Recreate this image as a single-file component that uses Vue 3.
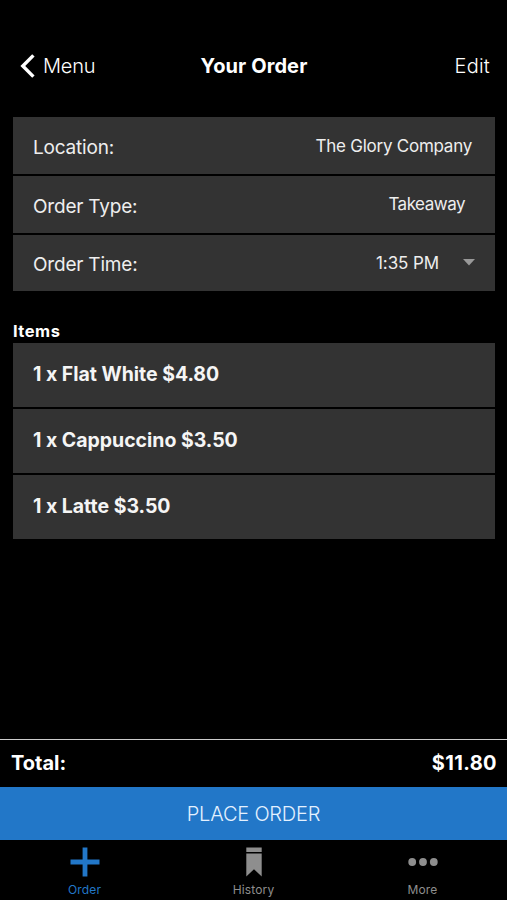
<template>
  <div class="screen">
    <header class="navbar">
      <button type="button" class="nav-back">
        <svg class="chevron" viewBox="0 0 16 24" width="16" height="24">
          <path d="M13.4 1.4 L2.8 12 L13.4 22.6" fill="none" stroke="#fff" stroke-width="3.4" />
        </svg>
        <span class="nav-text menu-text">Menu</span>
      </button>
      <h1 class="nav-title">Your Order</h1>
      <button type="button" class="nav-edit nav-text">Edit</button>
    </header>

    <main class="content">
      <section class="details">
        <div v-for="row in details" :key="row.label" class="detail-row">
          <span class="detail-label">{{ row.label }}</span>
          <span class="detail-value" :class="row.name">{{ row.value }}</span>
          <svg v-if="row.picker" class="caret" viewBox="0 0 12 7" width="12" height="7">
            <path d="M0 0 H12 L6 6.6 Z" fill="#999" />
          </svg>
        </div>
      </section>

      <h2 class="items-title">Items</h2>
      <section class="items">
        <div v-for="item in items" :key="item.name" class="item-row">
          <span>{{ item.qty }} x {{ item.name }} ${{ item.price }}</span>
        </div>
      </section>
    </main>

    <div class="total">
      <span class="total-label">Total:</span>
      <span class="total-price">$11.80</span>
    </div>
    <button type="button" class="place-order"><span>PLACE ORDER</span></button>

    <nav class="tabbar">
      <a class="tab active">
        <svg viewBox="0 0 30 30" width="30" height="30">
          <path d="M15 0.5 V29.5 M0.5 15 H29.5" fill="none" stroke="currentColor" stroke-width="4.8" />
        </svg>
        <span>Order</span>
      </a>
      <a class="tab">
        <svg viewBox="0 0 30 30" width="30" height="30">
          <path d="M7.3 0.5 H22.7 V5 H7.3 Z M7.3 6.4 H22.7 V29.5 L15 22.3 L7.3 29.5 Z" fill="currentColor" />
        </svg>
        <span>History</span>
      </a>
      <a class="tab">
        <svg viewBox="0 0 30 30" width="30" height="30">
          <circle cx="4.2" cy="15" r="3.9" fill="currentColor" />
          <circle cx="15" cy="15" r="3.9" fill="currentColor" />
          <circle cx="25.8" cy="15" r="3.9" fill="currentColor" />
        </svg>
        <span>More</span>
      </a>
    </nav>
  </div>
</template>

<script setup>
import { ref } from 'vue'

const details = ref([
  { name: 'location', label: 'Location:', value: 'The Glory Company' },
  { name: 'type', label: 'Order Type:', value: 'Takeaway' },
  { name: 'time', label: 'Order Time:', value: '1:35 PM', picker: true }
])

const items = ref([
  { qty: 1, name: 'Flat White', price: '4.80' },
  { qty: 1, name: 'Cappuccino', price: '3.50' },
  { qty: 1, name: 'Latte', price: '3.50' }
])
</script>

<style>
body {
  margin: 0;
  background: #000;
}
</style>

<style scoped>
.screen {
  display: flex;
  flex-direction: column;
  height: 100vh;
  background: #000;
  color: #fff;
  font-family: Inter, "Liberation Sans", sans-serif;
  overflow: hidden;
}

button {
  padding: 0;
  border: none;
  background: none;
  color: inherit;
  font-family: inherit;
  cursor: pointer;
}

.navbar {
  display: grid;
  grid-template-columns: 1fr auto 1fr;
  align-items: center;
  height: 50px;
  padding: 41px 17px 26px 20px;
}

.nav-back {
  display: flex;
  align-items: center;
  gap: 7px;
}

.nav-text {
  font-size: 20px;
  line-height: 24px;
  font-weight: 300;
}

.menu-text {
  letter-spacing: -0.2px;
}

.nav-title {
  margin: 0 2px 0 0;
  font-size: 20px;
  line-height: 24px;
  font-weight: 700;
  letter-spacing: 0.1px;
}

.nav-edit {
  justify-self: end;
  letter-spacing: 0.2px;
}

.content {
  flex: 1;
  padding: 0 12px 0 13px;
}

.details {
  display: flex;
  flex-direction: column;
  gap: 2px;
}

.detail-row {
  display: flex;
  align-items: center;
  height: 56.8px;
  padding: 0 20px;
  background: #333;
  color: #eee;
}

.detail-label {
  flex: 1;
  padding-top: 4px;
  font-size: 19px;
  letter-spacing: -0.2px;
}

.detail-value {
  padding-top: 1px;
  font-size: 17px;
  letter-spacing: -0.25px;
}

.detail-value.location {
  margin-right: 3px;
}

.detail-value.type {
  margin-right: 10px;
  padding-top: 0;
  letter-spacing: -0.5px;
}

.detail-value.time {
  letter-spacing: -0.1px;
}

.caret {
  margin-left: 24px;
}

.items-title {
  margin: 28.6px 0 0;
  height: 23px;
  font-size: 16.5px;
  line-height: 23px;
  font-weight: 700;
  letter-spacing: 0.5px;
}

.items {
  display: flex;
  flex-direction: column;
  gap: 1.5px;
}

.item-row {
  display: flex;
  align-items: center;
  box-sizing: border-box;
  height: 64.5px;
  padding: 0 20px 2px;
  background: #333;
  color: #f5f5f5;
  font-size: 19.5px;
  font-weight: 700;
  letter-spacing: -0.03px;
}

.total {
  display: flex;
  align-items: center;
  justify-content: space-between;
  box-sizing: border-box;
  height: 47.5px;
  padding: 0 10px 1px 11px;
  border-top: 1.5px solid #ccc;
  font-size: 20px;
  font-weight: 700;
}

.total-price {
  letter-spacing: 0.4px;
}

.place-order {
  height: 53.5px;
  padding-top: 1px;
  background: #2277c8;
  color: #e4f1ff;
  font-size: 20px;
  font-weight: 300;
  letter-spacing: -0.2px;
}

.tabbar {
  display: grid;
  grid-template-columns: repeat(3, 1fr);
  height: 60px;
}

.tab {
  display: flex;
  flex-direction: column;
  align-items: center;
  padding-top: 7px;
  color: #8e8e8e;
  font-size: 12px;
  line-height: 15px;
}

.tab span {
  margin-top: 5px;
  letter-spacing: 0.15px;
}

.tab.active {
  color: #2277c8;
}
</style>
